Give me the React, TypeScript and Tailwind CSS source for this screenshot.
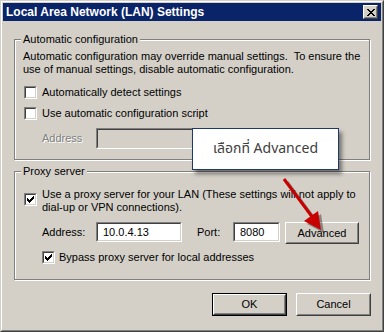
import React from "react";

const FONT = { fontFamily: '"Liberation Sans", Arial, sans-serif' };

function Check() {
  const px: [number, number][] = [
    [6, 0], [5, 1], [6, 1], [0, 2], [4, 2], [5, 2], [6, 2],
    [0, 3], [1, 3], [3, 3], [4, 3], [5, 3],
    [0, 4], [1, 4], [2, 4], [3, 4], [4, 4],
    [1, 5], [2, 5], [3, 5], [2, 6],
  ];
  return (
    <svg width="7" height="7" viewBox="0 0 7 7" shapeRendering="crispEdges">
      {px.map(([x, y], i) => (
        <rect key={i} x={x} y={y} width="1" height="1" fill="#000" />
      ))}
    </svg>
  );
}

function Checkbox({ checked }: { checked?: boolean }) {
  return (
    <div className="w-[13px] h-[13px] shrink-0 border border-t-[#808080] border-l-[#808080] border-r-white border-b-white">
      <div className="w-[11px] h-[11px] border border-t-[#404040] border-l-[#404040] border-r-[#d4d0c8] border-b-[#d4d0c8] bg-white flex items-center justify-center">
        {checked && <Check />}
      </div>
    </div>
  );
}

function Input({
  value,
  width,
  height,
  disabled,
}: {
  value?: string;
  width: string;
  height: string;
  disabled?: boolean;
}) {
  return (
    <div
      className={`${width} ${height} shrink-0 border border-t-[#808080] border-l-[#808080] border-r-white border-b-white`}
    >
      <div
        className={`w-full h-full border border-t-[#404040] border-l-[#404040] border-r-[#d4d0c8] border-b-[#d4d0c8] ${
          disabled ? "bg-[#d4d0c8]" : "bg-white"
        } flex items-center pl-[5px] text-[11px] leading-[13px] text-black`}
      >
        {value}
      </div>
    </div>
  );
}

function Button({
  label,
  w,
  h,
  isDefault,
}: {
  label: string;
  w: string;
  h: string;
  isDefault?: boolean;
}) {
  const inner = (
    <div className="w-full h-full border border-t-white border-l-white border-r-[#404040] border-b-[#404040]">
      <div className="w-full h-full border border-t-[#d4d0c8] border-l-[#d4d0c8] border-r-[#808080] border-b-[#808080] flex items-center justify-center text-[11px] leading-[13px] text-black">
        {label}
      </div>
    </div>
  );
  if (isDefault) {
    return (
      <div className={`${w} ${h} shrink-0 border border-black`}>{inner}</div>
    );
  }
  return <div className={`${w} ${h} shrink-0`}>{inner}</div>;
}

function Group({
  title,
  heightClass,
  children,
}: {
  title: string;
  heightClass: string;
  children: React.ReactNode;
}) {
  return (
    <div
      className={`relative ml-[11px] w-[356px] ${heightClass} border border-[#808080] shadow-[inset_1px_1px_0_#fff,1px_1px_0_#fff]`}
    >
      <span className="absolute left-[6px] top-[-7px] px-[2px] bg-[#d4d0c8] text-[11px] leading-[13px] text-black">
        {title}
      </span>
      {children}
    </div>
  );
}

export default function App() {
  return (
    <div
      style={FONT}
      className="relative w-[384px] h-[332px] bg-[#d4d0c8] border border-t-[#d4d0c8] border-l-[#d4d0c8] border-r-[#404040] border-b-[#404040] overflow-hidden"
    >
      <div className="w-full h-full border border-t-white border-l-white border-r-[#808080] border-b-[#808080] p-[1px] flex flex-col">
        {/* Title bar */}
        <div className="h-[18px] bg-[#0a246a] flex items-center justify-between pl-[3px] pr-[3px]">
          <span className="text-white font-bold text-[12px] leading-[14px]">
            Local Area Network (LAN) Settings
          </span>
          <div className="w-[15px] h-[14px] border border-t-white border-l-white border-r-[#404040] border-b-[#404040]">
            <div className="w-full h-full border border-t-[#d4d0c8] border-l-[#d4d0c8] border-r-[#808080] border-b-[#808080] bg-[#d4d0c8] flex items-center justify-center">
              <svg width="8" height="7" viewBox="0 0 8 7" shapeRendering="crispEdges">
                <path d="M0 0h2v1h-2zM6 0h2v1h-2zM1 1h2v1h-2zM5 1h2v1h-2zM2 2h4v1h-4zM3 3h2v1h-2zM2 4h4v1h-4zM1 5h2v1h-2zM5 5h2v1h-2zM0 6h2v1h-2zM6 6h2v1h-2z" fill="#000" />
              </svg>
            </div>
          </div>
        </div>

        <div className="mt-[18px] text-[11px] leading-[13px] text-black">
          {/* Automatic configuration */}
          <Group title="Automatic configuration" heightClass="h-[121px]">
            <div className="pl-[8px] pt-[10px] flex flex-col">
              <p>
                Automatic configuration may override manual settings.&nbsp; To ensure the
                <br />
                use of manual settings, disable automatic configuration.
              </p>
              <div className="mt-[10px] ml-[1px] flex items-center gap-[5px]">
                <Checkbox />
                <span>Automatically detect settings</span>
              </div>
              <div className="mt-[8px] ml-[1px] flex items-center gap-[5px]">
                <Checkbox />
                <span>Use automatic configuration script</span>
              </div>
              <div className="mt-[8px] ml-[19px] flex items-center">
                <span className="w-[54px] text-[#808080] [text-shadow:1px_1px_0_#fff]">
                  Address
                </span>
                <Input width="w-[240px]" height="h-[21px]" disabled />
              </div>
            </div>
          </Group>

          {/* Proxy server */}
          <div className="mt-[11px]">
            <Group title="Proxy server" heightClass="h-[109px]">
              <div className="pl-[8px] pt-[16px] flex flex-col">
                <div className="ml-[1px] flex items-start gap-[5px]">
                  <div className="mt-[5px]">
                    <Checkbox checked />
                  </div>
                  <span>
                    Use a proxy server for your LAN (These settings will not apply to
                    <br />
                    dial-up or VPN connections).
                  </span>
                </div>
                <div className="mt-[8px] ml-[19px] flex items-start">
                  <span className="w-[54px] mt-[4px]">Address:</span>
                  <Input value="10.0.4.13" width="w-[86px]" height="h-[20px]" />
                  <span className="ml-[15px] w-[36px] mt-[4px]">Port:</span>
                  <Input value="8080" width="w-[47px]" height="h-[20px]" />
                  <div className="ml-[5px]">
                    <Button label="Advanced" w="w-[74px]" h="h-[22px]" />
                  </div>
                </div>
                <div className="mt-[7px] ml-[19px] flex items-center gap-[4px]">
                  <Checkbox checked />
                  <span>Bypass proxy server for local addresses</span>
                </div>
              </div>
            </Group>
          </div>

          {/* Buttons */}
          <div className="mt-[13px] ml-[209px] flex gap-[9px]">
            <Button label="OK" w="w-[75px]" h="h-[23px]" isDefault />
            <Button label="Cancel" w="w-[75px]" h="h-[23px]" />
          </div>
        </div>
      </div>

      {/* Callout */}
      <div className="absolute left-[191px] top-[127px] w-[147px] h-[42px] bg-white border border-[#1f3a68] shadow-[3px_4px_4px_rgba(0,0,0,0.45)] flex items-center justify-center">
        <span
          className="text-[14px] leading-[16px] text-[#404040]"
          style={{ fontFamily: '"Noto Sans Thai", "Noto Sans", "DejaVu Sans", sans-serif' }}
        >
          เลือกที่ Advanced
        </span>
      </div>

      {/* Red arrow */}
      <svg
        className="absolute left-0 top-0 pointer-events-none"
        width="384"
        height="332"
        viewBox="0 0 384 332"
      >
        <g transform="translate(2,2)" opacity="0.35">
          <line x1="284" y1="179" x2="313" y2="218" stroke="#000" strokeWidth="3" />
          <polygon points="321,230 304,221 318,211" fill="#000" />
        </g>
        <line x1="283" y1="178" x2="312" y2="217" stroke="#c80000" strokeWidth="3" />
        <polygon points="320,229 303,220 317,210" fill="#c80000" />
      </svg>
    </div>
  );
}
